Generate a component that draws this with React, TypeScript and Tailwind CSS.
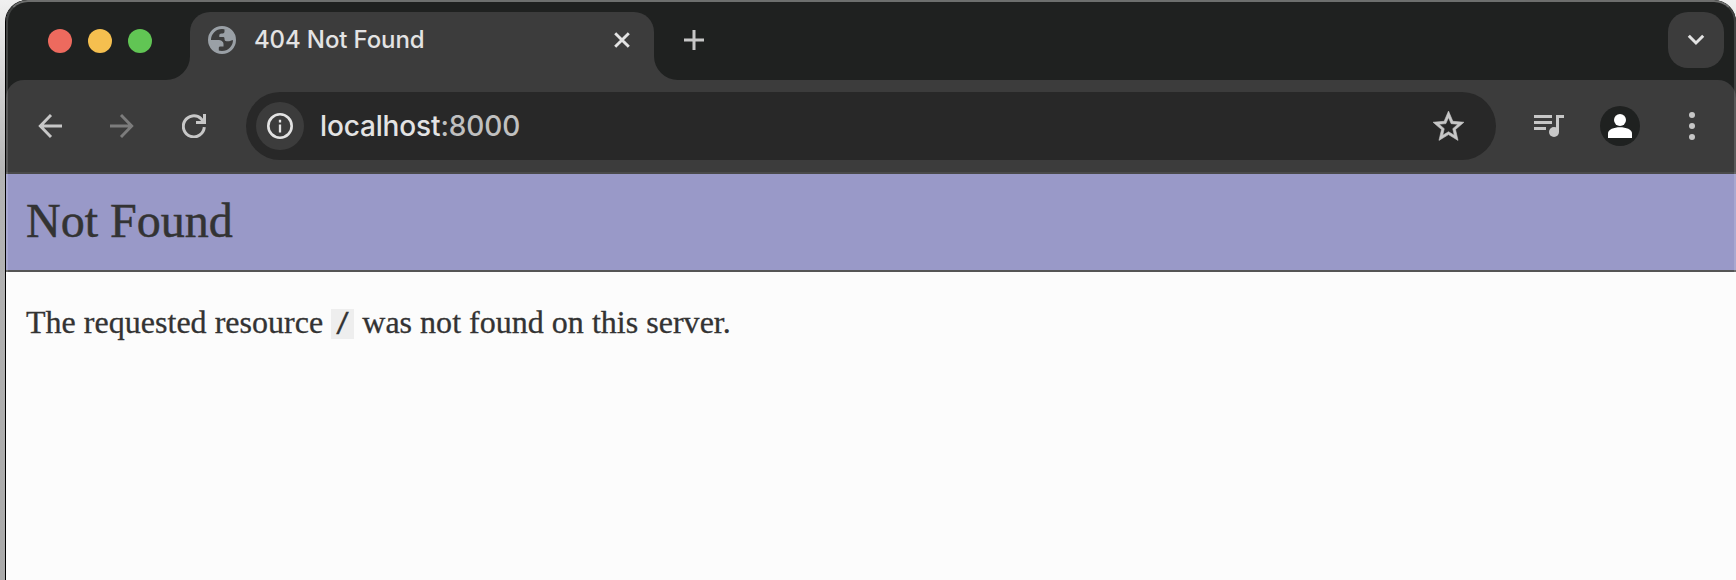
import React from "react";

function Globe() {
  return (
    <svg viewBox="0 0 28 28" className="h-7 w-7 shrink-0">
      <circle cx="14" cy="14" r="12.5" fill="none" stroke="#9aa0a6" strokeWidth="3" />
      <path
        d="M16.500 3V5.500C16.500 7 15.500 7.500 14 7.500H13.500C12 7.500 11.300 8.300 11.300 9.500V11H15C16 11 16.500 11.500 16.500 12.500V13C16.500 14.500 17.300 15.200 18.500 15.200H21C22.500 15.200 23.500 14 25.500 14V8L22 4z"
        fill="#9aa0a6"
      />
      <path
        d="M1.500 14H10C13 14 15.500 15.500 15.500 18V20.500H12.500C11.300 20.500 10.800 21 10.800 22V25.500L5 23z"
        fill="#9aa0a6"
      />
    </svg>
  );
}

function TabStrip() {
  return (
    <div className="flex h-20 w-full shrink-0 items-end bg-[#1f2120]">
      <div className="flex h-20 w-40 shrink-0 items-center gap-4 pl-[42px] pt-0.5">
        <span className="h-6 w-6 rounded-full bg-[#ed6a5e]" />
        <span className="h-6 w-6 rounded-full bg-[#f5bf4f]" />
        <span className="h-6 w-6 rounded-full bg-[#61c554]" />
      </div>
      <svg viewBox="0 0 24 24" className="h-6 w-6 shrink-0">
        <path d="M24 0A24 24 0 0 1 0 24H24z" fill="#3c3c3c" />
      </svg>
      <div className="flex h-[68px] w-[464px] shrink-0 items-center rounded-t-[20px] bg-[#3c3c3c] pb-3 pl-[18px] pr-6">
        <Globe />
        <span className="ml-[18px] flex-1 whitespace-nowrap font-['Inter',sans-serif] text-[24px] font-medium leading-7 tracking-[-0.13px] text-[#e3e3e3]">
          404 Not Found
        </span>
        <svg viewBox="0 0 16 16" className="h-4 w-4">
          <path d="M1.200 1.200L14.800 14.800M14.800 1.200L1.200 14.800" stroke="#e3e3e3" strokeWidth="2.900" />
        </svg>
      </div>
      <svg viewBox="0 0 24 24" className="h-6 w-6 shrink-0">
        <path d="M0 0A24 24 0 0 0 24 24H0z" fill="#3c3c3c" />
      </svg>
      <svg viewBox="0 0 20 20" className="mb-[30px] ml-1.5 h-5 w-5">
        <path d="M10 0V20M0 10H20" stroke="#c7c7c7" strokeWidth="3" />
      </svg>
      <div className="mb-3 ml-auto mr-3 flex h-14 w-14 items-center justify-center rounded-[20px] bg-[#3c3c3c]">
        <svg viewBox="0 0 18 12" className="h-3 w-[18px]">
          <path d="M1.800 1.800L9 9L16.200 1.800" fill="none" stroke="#e3e3e3" strokeWidth="3" />
        </svg>
      </div>
    </div>
  );
}

function Toolbar() {
  return (
    <div className="flex h-[94px] w-full shrink-0 items-center border-b-2 border-[#4a4a4a] bg-[#3c3c3c] pl-8">
      <svg viewBox="0 0 24 24" className="h-6 w-6 shrink-0">
        <path d="M24 12H3M13 1L2.300 12L13 23" fill="none" stroke="#c7c7c7" strokeWidth="2.900" />
      </svg>
      <svg viewBox="0 0 24 24" className="ml-12 h-6 w-6 shrink-0">
        <path d="M0 12H21M11 1L21.700 12L11 23" fill="none" stroke="#7c7c7c" strokeWidth="2.900" />
      </svg>
      <svg viewBox="0 0 24 24" className="ml-12 h-6 w-6 shrink-0">
        <path
          d="M22.300 13.200A10.500 10.500 0 1 1 19 4.700L22 7.800M14 8.400H22.500V0"
          fill="none"
          stroke="#c7c7c7"
          strokeWidth="3"
        />
      </svg>
      <div className="ml-10 flex h-[68px] w-[1250px] shrink-0 items-center rounded-full bg-[#282828] pl-2.5 pr-[29px]">
        <div className="flex h-12 w-12 items-center justify-center rounded-full bg-[#3c3c3c]">
          <svg viewBox="0 0 26 26" className="h-[26px] w-[26px]">
            <circle cx="13" cy="13" r="11.700" fill="none" stroke="#e3e3e3" strokeWidth="2.600" />
            <path d="M13 11.500V19.500M13 6.800V9.400" stroke="#e3e3e3" strokeWidth="2.300" />
          </svg>
        </div>
        <span className="ml-4 flex-1 whitespace-nowrap font-['Inter',sans-serif] text-[28px] font-medium leading-8 tracking-[-0.15px] text-[#e3e3e3]">
          localhost<span className="tracking-[-0.1px] text-[#c0c0c0]">:8000</span>
        </span>
        <svg viewBox="0 0 24 24" className="h-[37px] w-[37px]" fill="#c7c7c7" stroke="#c7c7c7" strokeWidth="0.400">
          <path d="M22 9.240l-7.190-.62L12 2 9.190 8.630 2 9.240l5.460 4.730L5.820 21 12 17.270 18.180 21l-1.630-7.030L22 9.240zM12 15.400l-3.760 2.270 1-4.280-3.320-2.880 4.380-.38L12 6.100l1.710 4.040 4.380.38-3.320 2.880 1 4.280L12 15.400z" />
        </svg>
      </div>
      <svg viewBox="0 0 30 24" className="ml-[38px] h-6 w-[30px] shrink-0">
        <path d="M0 2.500H18M0 8.500H18M0 14.500H12" stroke="#c7c7c7" strokeWidth="3" />
        <path d="M22 1H30V4H25V18H22z" fill="#c7c7c7" />
        <circle cx="20" cy="18" r="5" fill="#c7c7c7" />
      </svg>
      <div className="ml-9 flex h-10 w-10 shrink-0 items-center justify-center rounded-full bg-[#1f2120]">
        <svg viewBox="0 0 24 24" className="h-6 w-6">
          <circle cx="12" cy="6" r="6" fill="#fff" />
          <path d="M0 24V19.500C0 15.500 6 13.300 12 13.300S24 15.500 24 19.500V24z" fill="#fff" />
        </svg>
      </div>
      <svg viewBox="0 0 6 28" className="ml-[49px] h-7 w-1.5 shrink-0">
        <circle cx="3" cy="3" r="3" fill="#c7c7c7" />
        <circle cx="3" cy="14" r="3" fill="#c7c7c7" />
        <circle cx="3" cy="25" r="3" fill="#c7c7c7" />
      </svg>
    </div>
  );
}

export default function App() {
  return (
    <div className="h-[580px] w-[1736px] overflow-hidden bg-gradient-to-b from-[#f0f0f0] via-[#b4b4b4] via-30% to-[#aaaaaa] pl-[5px]">
      <div className="relative flex h-[600px] w-[1731px] flex-col overflow-hidden rounded-t-[22px] border-l border-black bg-[#fcfcfc]">
        <div className="bg-[#1f2120]">
          <TabStrip />
          <div className="overflow-hidden rounded-t-[18px]">
            <Toolbar />
          </div>
        </div>
        <header className="h-[98px] shrink-0 border-b-2 border-[#555] bg-[#9999c8] pl-5 pt-5">
          <h1 className="font-['Liberation_Serif',serif] text-[48px] font-normal leading-[54px] text-[#333] [-webkit-text-stroke:0.5px_#333]">
            Not Found
          </h1>
        </header>
        <p className="whitespace-nowrap pl-5 pt-[31px] font-['Liberation_Serif',serif] text-[32px] leading-[38px] tracking-[0.02px] text-[#333] [-webkit-text-stroke:0.3px_#333]">
          The requested resource{" "}
          <code className="inline-block h-[30px] w-[23px] bg-[#eee] text-center align-[1px] font-['DejaVu_Sans_Mono',monospace] text-[26px] leading-[28px]">
            /
          </code>{" "}
          was not found on this server.
        </p>
        <div className="pointer-events-none absolute inset-0 rounded-t-[22px] border-2 border-white/15 border-t-white/35" />
      </div>
    </div>
  );
}
